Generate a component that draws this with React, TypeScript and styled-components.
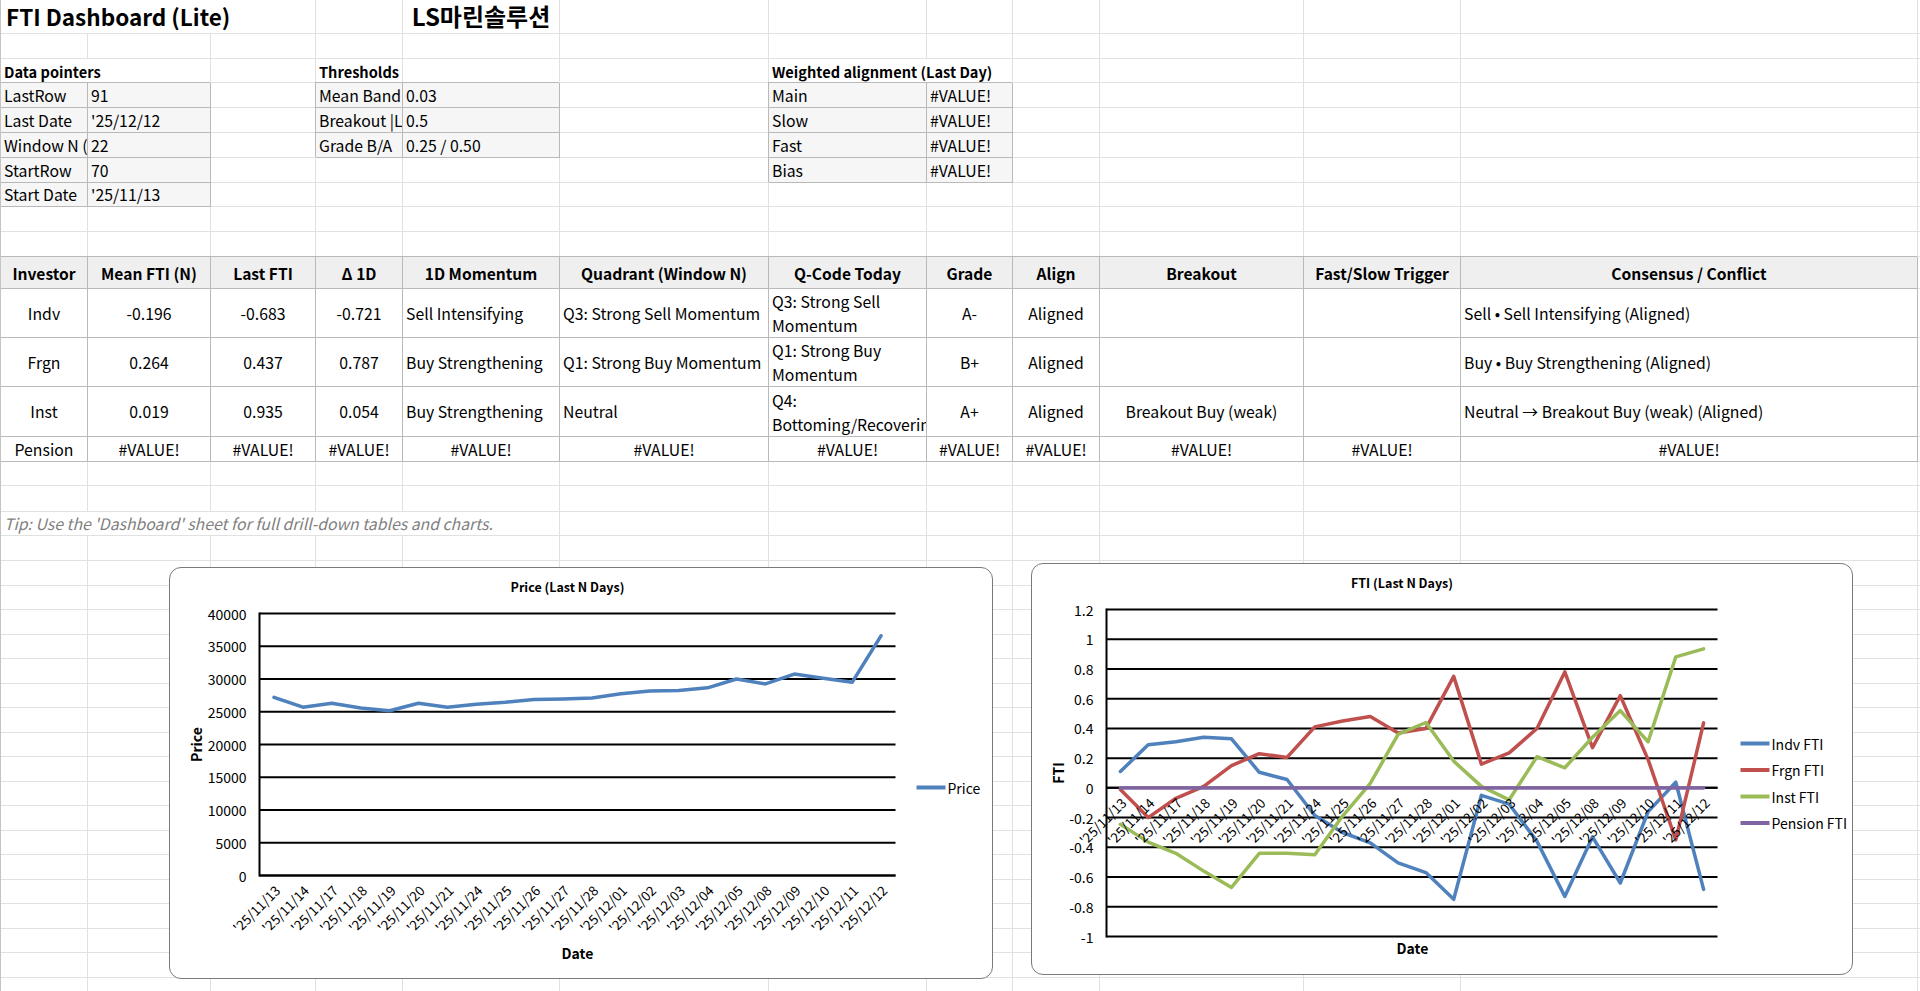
import React from "react";
import styled, { createGlobalStyle, css } from "styled-components";

const GlobalStyle = createGlobalStyle`
  html, body { margin: 0; padding: 0; background: #ffffff; }
  body {
    font-family: "Noto Sans CJK KR", "Noto Sans", sans-serif;
    color: #000;
    overflow: hidden;
  }
`;

const COLS = "87px 123px 105px 87px 157px 209px 158px 86px 87px 204px 157px 457px 1fr";
const ROWS = [
  34, 25, 24, 25, 25, 25, 25, 24, 25, 25, 32, 49, 49, 50, 25, 24, 26, 24, 25,
  25, 24, 25, 24, 25, 24, 25, 24, 25, 24, 25, 24, 25, 24, 25, 24, 25, 24,
];
const NCOLS = 13;

type Kind = "blank" | "title" | "brand" | "section" | "box" | "head" | "data" | "tip";
type Align = "left" | "center";
interface Spec {
  kind: Kind;
  text?: string;
  lines?: string[];
  align?: Align;
  span?: number;
}

const content: Record<string, Spec> = {};
const put = (r: number, c: number, s: Spec) => {
  content[`${r},${c}`] = s;
};

put(0, 0, { kind: "title", text: "FTI Dashboard (Lite)", span: 3 });
put(0, 4, { kind: "brand", text: "LS마린솔루션", align: "center" });
put(2, 0, { kind: "section", text: "Data pointers", span: 2 });
put(2, 3, { kind: "section", text: "Thresholds" });
put(2, 6, { kind: "section", text: "Weighted alignment (Last Day)", span: 2 });

[
  ["LastRow", "91"],
  ["Last Date", "'25/12/12"],
  ["Window N (days)", "22"],
  ["StartRow", "70"],
  ["Start Date", "'25/11/13"],
].forEach(([k, v], i) => {
  put(3 + i, 0, { kind: "box", text: k });
  put(3 + i, 1, { kind: "box", text: v });
});

[
  ["Mean Band", "0.03"],
  ["Breakout |Last|", "0.5"],
  ["Grade B/A", "0.25 / 0.50"],
].forEach(([k, v], i) => {
  put(3 + i, 3, { kind: "box", text: k });
  put(3 + i, 4, { kind: "box", text: v });
});

["Main", "Slow", "Fast", "Bias"].forEach((k, i) => {
  put(3 + i, 6, { kind: "box", text: k });
  put(3 + i, 7, { kind: "box", text: "#VALUE!" });
});

const HEAD = [
  "Investor",
  "Mean FTI (N)",
  "Last FTI",
  "Δ 1D",
  "1D Momentum",
  "Quadrant (Window N)",
  "Q-Code Today",
  "Grade",
  "Align",
  "Breakout",
  "Fast/Slow Trigger",
  "Consensus / Conflict",
];
HEAD.forEach((h, c) => put(10, c, { kind: "head", text: h, align: "center" }));

const ALIGNS: Align[] = [
  "center", "center", "center", "center", "left", "left",
  "left", "center", "center", "center", "center", "left",
];

const DATA: (string | string[])[][] = [
  [
    "Indv", "-0.196", "-0.683", "-0.721", "Sell Intensifying", "Q3: Strong Sell Momentum",
    ["Q3: Strong Sell", "Momentum"], "A-", "Aligned", "", "", "Sell • Sell Intensifying (Aligned)",
  ],
  [
    "Frgn", "0.264", "0.437", "0.787", "Buy Strengthening", "Q1: Strong Buy Momentum",
    ["Q1: Strong Buy", "Momentum"], "B+", "Aligned", "", "", "Buy • Buy Strengthening (Aligned)",
  ],
  [
    "Inst", "0.019", "0.935", "0.054", "Buy Strengthening", "Neutral",
    ["Q4:", "Bottoming/Recovering"], "A+", "Aligned", "Breakout Buy (weak)", "",
    "Neutral → Breakout Buy (weak) (Aligned)",
  ],
];
DATA.forEach((row, i) => {
  row.forEach((v, c) => {
    if (Array.isArray(v)) put(11 + i, c, { kind: "data", lines: v, align: ALIGNS[c] });
    else put(11 + i, c, { kind: "data", text: v, align: ALIGNS[c] });
  });
});
HEAD.forEach((_, c) =>
  put(14, c, { kind: "data", text: c === 0 ? "Pension" : "#VALUE!", align: "center" })
);

put(17, 0, {
  kind: "tip",
  text: "Tip: Use the 'Dashboard' sheet for full drill-down tables and charts.",
  span: 5,
});

const boxed = css`
  border-right: 1px solid #b9b9b9;
  border-bottom: 1px solid #b9b9b9;
  box-shadow: -1px -1px 0 #b9b9b9;
`;

const kindStyles: Record<Kind, ReturnType<typeof css>> = {
  blank: css``,
  title: css`
    font-size: 22.5px;
    font-weight: 700;
    padding: 0 0 0 5px;
  `,
  brand: css`
    font-size: 24px;
    font-weight: 700;
    padding: 0;
    overflow: visible;
  `,
  section: css`
    font-weight: 700;
    font-size: 14.6px;
  `,
  box: css`
    ${boxed};
    background: #f6f6f6;
  `,
  head: css`
    ${boxed};
    background: #efefef;
    font-weight: 700;
    font-size: 15.6px;
  `,
  data: css`
    ${boxed};
    background: #ffffff;
  `,
  tip: css`
    font-style: italic;
    color: #7f7f7f;
  `,
};

const Sheet = styled.div`
  position: relative;
  display: grid;
  grid-template-columns: ${COLS};
  grid-template-rows: ${ROWS.map((h) => `${h}px`).join(" ")};
  border-left: 1px solid #c4c4c4;
  width: 1919px;
  height: 991px;
  overflow: hidden;
`;

const Cell = styled.div<{ $kind: Kind; $align: Align; $span: number }>`
  grid-column: span ${(p) => p.$span};
  box-sizing: border-box;
  min-width: 0;
  display: flex;
  align-items: center;
  justify-content: ${(p) => (p.$align === "center" ? "center" : "flex-start")};
  padding: 2px 3px 0;
  border-right: 1px solid #e1e1e1;
  border-bottom: 1px solid #e1e1e1;
  font-size: 15.8px;
  line-height: 1.2;
  white-space: nowrap;
  overflow: hidden;
  ${(p) => kindStyles[p.$kind]};
`;

const Lines = styled.span`
  display: block;
  line-height: 24px;
`;

const ChartFrame = styled.div<{ $left: number; $top: number; $w: number; $h: number }>`
  position: absolute;
  left: ${(p) => p.$left}px;
  top: ${(p) => p.$top}px;
  width: ${(p) => p.$w}px;
  height: ${(p) => p.$h}px;
  box-sizing: border-box;
  background: #ffffff;
  border: 1.5px solid #7a7a7a;
  border-radius: 12px;
  overflow: hidden;
`;

const ChartSvg = styled.svg`
  display: block;
  font-family: "Noto Sans CJK KR", "Noto Sans", sans-serif;
`;

const CATS = [
  "'25/11/13", "'25/11/14", "'25/11/17", "'25/11/18", "'25/11/19", "'25/11/20",
  "'25/11/21", "'25/11/24", "'25/11/25", "'25/11/26", "'25/11/27", "'25/11/28",
  "'25/12/01", "'25/12/02", "'25/12/03", "'25/12/04", "'25/12/05", "'25/12/08",
  "'25/12/09", "'25/12/10", "'25/12/11", "'25/12/12",
];

interface Series {
  name: string;
  color: string;
  values: number[];
}

interface ChartProps {
  left: number;
  top: number;
  width: number;
  height: number;
  title: string;
  titleY: number;
  yTitle: string;
  yTitleX: number;
  xTitleX: number;
  xTitleY: number;
  plot: { left: number; right: number; top: number; bottom: number };
  yMin: number;
  yMax: number;
  yStep: number;
  yFmt: (v: number) => string;
  crossAt: number;
  series: Series[];
  legendX: number;
  legendY: number;
  legendGap: number;
}

function LineChart(p: ChartProps) {
  const { plot } = p;
  const n = CATS.length;
  const catW = (plot.right - plot.left) / n;
  const yOf = (v: number) =>
    plot.bottom - ((v - p.yMin) / (p.yMax - p.yMin)) * (plot.bottom - plot.top);
  const xOf = (i: number) => plot.left + (i + 0.5) * catW;
  const steps = Math.round((p.yMax - p.yMin) / p.yStep);
  const ticks = Array.from({ length: steps + 1 }, (_, i) => p.yMin + i * p.yStep);
  const axisY = yOf(p.crossAt);

  return (
    <ChartFrame $left={p.left} $top={p.top} $w={p.width} $h={p.height}>
      <ChartSvg width={p.width - 3} height={p.height - 3} viewBox={`1.5 1.5 ${p.width - 3} ${p.height - 3}`}>
        <text x={(plot.left + plot.right) / 2 - 10} y={p.titleY} textAnchor="middle" dominantBaseline="central" fontSize={12.5} fontWeight={700}>
          {p.title}
        </text>
        {ticks.map((v) => (
          <g key={v.toFixed(2)}>
            <line x1={plot.left} x2={plot.right} y1={yOf(v)} y2={yOf(v)} stroke="#000" strokeWidth={2} />
            <text x={plot.left - 13} y={yOf(v)} textAnchor="end" dominantBaseline="central" fontSize={14}>
              {p.yFmt(v)}
            </text>
          </g>
        ))}
        <line x1={plot.left} x2={plot.left} y1={plot.top - 1} y2={plot.bottom + 1} stroke="#000" strokeWidth={2} />
        <line x1={plot.left} x2={plot.right} y1={axisY} y2={axisY} stroke="#000" strokeWidth={2} />
        {p.series.map((s) => (
          <polyline
            key={s.name}
            points={s.values.map((v, i) => `${xOf(i).toFixed(1)},${yOf(v).toFixed(1)}`).join(" ")}
            fill="none"
            stroke={s.color}
            strokeWidth={3.5}
            strokeLinejoin="round"
            strokeLinecap="round"
          />
        ))}
        {CATS.map((c, i) => (
          <text
            key={c}
            transform={`translate(${(xOf(i) + 3).toFixed(1)},${(axisY + 12).toFixed(1)}) rotate(-45)`}
            textAnchor="end"
            dominantBaseline="central"
            fontSize={13.5}
          >
            {c}
          </text>
        ))}
        <text
          transform={`translate(${p.yTitleX},${(plot.top + plot.bottom) / 2}) rotate(-90)`}
          textAnchor="middle"
          dominantBaseline="central"
          fontSize={14}
          fontWeight={700}
        >
          {p.yTitle}
        </text>
        <text x={p.xTitleX} y={p.xTitleY} textAnchor="middle" dominantBaseline="central" fontSize={14} fontWeight={700}>
          Date
        </text>
        {p.series.map((s, i) => {
          const y = p.legendY + i * p.legendGap;
          return (
            <g key={`lg-${s.name}`}>
              <line x1={p.legendX} x2={p.legendX + 29} y1={y} y2={y} stroke={s.color} strokeWidth={4} />
              <text x={p.legendX + 31} y={y} dominantBaseline="central" fontSize={14}>
                {s.name}
              </text>
            </g>
          );
        })}
      </ChartSvg>
    </ChartFrame>
  );
}

const PRICE = [
  27200, 25700, 26300, 25550, 25150, 26300, 25700, 26150, 26450, 26850, 26950, 27100,
  27750, 28150, 28250, 28650, 30000, 29250, 30750, 30100, 29500, 36600,
];
const INDV = [
  0.11, 0.29, 0.31, 0.34, 0.33, 0.105, 0.056, -0.186, -0.3, -0.37, -0.505, -0.57,
  -0.75, -0.05, -0.11, -0.36, -0.73, -0.33, -0.64, -0.16, 0.038, -0.683,
];
const FRGN = [
  -0.01, -0.2, -0.07, 0.01, 0.15, 0.23, 0.205, 0.41, 0.45, 0.48, 0.37, 0.4, 0.75,
  0.16, 0.235, 0.4, 0.78, 0.27, 0.62, 0.19, -0.35, 0.437,
];
const INST = [
  -0.245, -0.365, -0.44, -0.56, -0.67, -0.44, -0.44, -0.45, -0.19, 0.03, 0.36, 0.44,
  0.18, 0.01, -0.08, 0.21, 0.135, 0.34, 0.52, 0.31, 0.881, 0.935,
];
const PENSION = CATS.map(() => 0);

const fmtFti = (v: number) => String(Number(v.toFixed(1)));

export default function App() {
  const cells: React.ReactNode[] = [];
  ROWS.forEach((_, r) => {
    let c = 0;
    while (c < NCOLS) {
      const s = content[`${r},${c}`] ?? { kind: "blank" as Kind };
      const span = s.span ?? 1;
      cells.push(
        <Cell key={`${r}-${c}`} $kind={s.kind} $align={s.align ?? "left"} $span={span}>
          {s.lines ? (
            <div>
              {s.lines.map((l) => (
                <Lines key={l}>{l}</Lines>
              ))}
            </div>
          ) : (
            s.text
          )}
        </Cell>
      );
      c += span;
    }
  });

  return (
    <>
      <GlobalStyle />
      <Sheet>
        {cells}
        <LineChart
          left={168}
          top={567}
          width={824}
          height={412}
          title="Price (Last N Days)"
          titleY={20}
          yTitle="Price"
          yTitleX={27}
          xTitleX={409}
          xTitleY={386}
          plot={{ left: 91, right: 727, top: 47, bottom: 309 }}
          yMin={0}
          yMax={40000}
          yStep={5000}
          yFmt={(v) => String(Math.round(v))}
          crossAt={0}
          series={[{ name: "Price", color: "#4F81BD", values: PRICE }]}
          legendX={748}
          legendY={221}
          legendGap={27}
        />
        <LineChart
          left={1030}
          top={563}
          width={822}
          height={412}
          title="FTI (Last N Days)"
          titleY={20}
          yTitle="FTI"
          yTitleX={27}
          xTitleX={382}
          xTitleY={385}
          plot={{ left: 76, right: 687, top: 47, bottom: 374 }}
          yMin={-1}
          yMax={1.2}
          yStep={0.2}
          yFmt={fmtFti}
          crossAt={0}
          series={[
            { name: "Indv FTI", color: "#4F81BD", values: INDV },
            { name: "Frgn FTI", color: "#C0504D", values: FRGN },
            { name: "Inst FTI", color: "#9BBB59", values: INST },
            { name: "Pension FTI", color: "#8064A2", values: PENSION },
          ]}
          legendX={710}
          legendY={181}
          legendGap={26.5}
        />
      </Sheet>
    </>
  );
}
